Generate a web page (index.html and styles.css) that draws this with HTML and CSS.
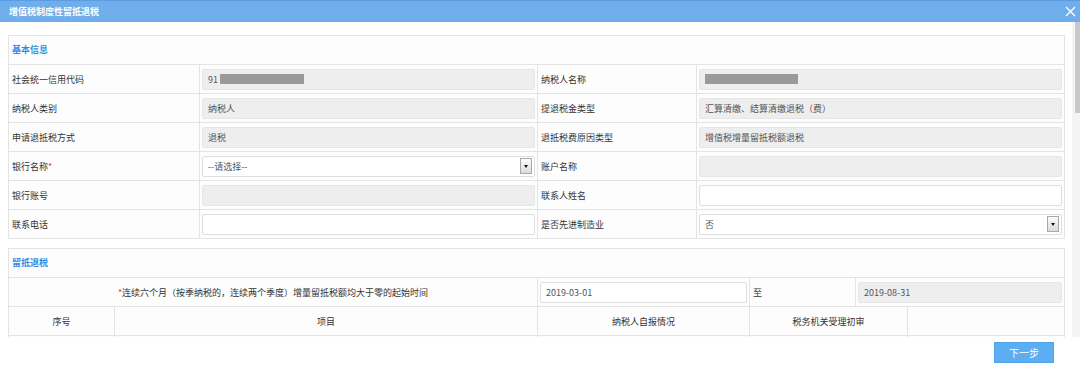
FILE: index.html
```html
<!DOCTYPE html>
<html lang="zh-CN">
<head>
  <meta charset="UTF-8">
  <meta name="viewport" content="width=device-width, initial-scale=1.0">
  <title>增值税制度性留抵退税</title>
  <link rel="stylesheet" href="styles.css">
</head>
<body>

  <div class="dialog">
    <div class="dialog__title">
      <span>增值税制度性留抵退税</span>
      <svg class="dialog__close" width="11" height="11" viewBox="0 0 11 11">
        <path d="M1 1 L10 10 M10 1 L1 10" stroke="#fff" stroke-width="1.4" fill="none"/>
      </svg>
    </div>

    <div class="dialog__body">
      <div class="dialog__content">

        <div class="panel">
          <div class="panel__header">基本信息</div>

          <div class="formRow">
            <span class="formRow__label">社会统一信用代码</span>
            <span class="formRow__field"><span class="input input--readonly">91<i class="mask mask--short"></i></span></span>
            <span class="formRow__label">纳税人名称</span>
            <span class="formRow__field"><span class="input input--readonly"><i class="mask mask--long"></i></span></span>
          </div>

          <div class="formRow">
            <span class="formRow__label">纳税人类别</span>
            <span class="formRow__field"><span class="input input--readonly">纳税人</span></span>
            <span class="formRow__label">提退税金类型</span>
            <span class="formRow__field"><span class="input input--readonly">汇算清缴、结算清缴退税（费）</span></span>
          </div>

          <div class="formRow">
            <span class="formRow__label">申请退抵税方式</span>
            <span class="formRow__field"><span class="input input--readonly">退税</span></span>
            <span class="formRow__label">退抵税费原因类型</span>
            <span class="formRow__field"><span class="input input--readonly">增值税增量留抵税额退税</span></span>
          </div>

          <div class="formRow">
            <span class="formRow__label">银行名称<em class="required">*</em></span>
            <span class="formRow__field"><span class="input select">--请选择--<b class="select__btn"></b></span></span>
            <span class="formRow__label">账户名称</span>
            <span class="formRow__field"><span class="input input--readonly"></span></span>
          </div>

          <div class="formRow">
            <span class="formRow__label">银行账号</span>
            <span class="formRow__field"><span class="input input--readonly"></span></span>
            <span class="formRow__label">联系人姓名</span>
            <span class="formRow__field"><span class="input"></span></span>
          </div>

          <div class="formRow">
            <span class="formRow__label">联系电话</span>
            <span class="formRow__field"><span class="input"></span></span>
            <span class="formRow__label">是否先进制造业</span>
            <span class="formRow__field"><span class="input select">否<b class="select__btn"></b></span></span>
          </div>
        </div>

        <div class="panel">
          <div class="panel__header">留抵退税</div>

          <div class="periodRow">
            <span class="periodRow__label"><em class="required">*</em>连续六个月（按季纳税的，连续两个季度）增量留抵税额均大于零的起始时间</span>
            <span class="formRow__field"><span class="input">2019-03-01</span></span>
            <span class="formRow__label">至</span>
            <span class="formRow__field"><span class="input input--readonly">2019-08-31</span></span>
          </div>

          <div class="tableHead">
            <span>序号</span>
            <span>项目</span>
            <span>纳税人自报情况</span>
            <span>税务机关受理初审</span>
            <span></span>
          </div>

          <div class="tableHead">
            <span></span>
            <span></span>
            <span></span>
            <span></span>
            <span></span>
          </div>
        </div>

      </div>
      <div class="scrollbar"><div class="scrollbar__thumb"></div></div>
    </div>

    <div class="dialog__footer">
      <button type="button" class="nextBtn">下一步</button>
    </div>
  </div>

</body>
</html>
```

FILE: styles.css
```css
* {
  box-sizing: border-box;
  padding: 0;
  margin: 0;
}
body {
  width: 1080px;
  height: 371px;
  overflow: hidden;
  background-color: #fff;
  font-family: "Noto Sans CJK SC", "Noto Sans", sans-serif;
  font-size: 9px;
  color: #333;
}
.dialog {
  display: flex;
  flex-direction: column;
  height: 371px;
}
.dialog__title {
  display: flex;
  justify-content: space-between;
  align-items: center;
  height: 22px;
  padding: 0 4px 0 9px;
  background-color: #6fadeb;
  border-top: 1px solid #5b9de0;
  color: #fff;
  font-weight: 700;
  font-size: 9px;
}
.dialog__close {
  margin-top: -1px;
}
.dialog__body {
  display: flex;
  height: 315px;
  overflow: hidden;
}
.dialog__content {
  flex-grow: 2;
  padding: 13px 7px 0 8px;
}
.scrollbar {
  width: 8px;
  background-color: #f4f4f4;
  padding-left: 3px;
}
.scrollbar__thumb {
  height: 91px;
  background-color: #c9c9c9;
}
.panel {
  border: 1px solid #e4e4e4;
  background-color: #fdfdfd;
  margin-bottom: 9px;
}
.panel__header {
  height: 28px;
  line-height: 28px;
  padding-left: 3px;
  color: #2f8ce6;
  font-weight: 700;
}
.formRow, .periodRow, .tableHead {
  display: grid;
  height: 29px;
  border-top: 1px solid #e4e4e4;
}
.formRow {
  grid-template-columns: 191px 338px 159px 1fr;
}
.periodRow {
  grid-template-columns: 529px 212px 106px 1fr;
}
.tableHead {
  grid-template-columns: 106px 423px 212px 158px 1fr;
}
.formRow__label {
  display: flex;
  align-items: center;
  padding-left: 3px;
  border-right: 1px solid #e4e4e4;
}
.formRow__field {
  display: flex;
  align-items: center;
  padding: 0 2px 0 2px;
  border-right: 1px solid #e4e4e4;
}
.formRow > span:last-child, .periodRow > span:last-child, .tableHead > span:last-child {
  border-right: none;
}
.periodRow__label {
  display: flex;
  align-items: center;
  justify-content: center;
  border-right: 1px solid #e4e4e4;
}
.tableHead span {
  display: flex;
  align-items: center;
  justify-content: center;
  border-right: 1px solid #e4e4e4;
}
.required {
  font-style: normal;
  color: #e8383d;
}
.input {
  position: relative;
  display: flex;
  align-items: center;
  width: 100%;
  height: 21px;
  padding-left: 5px;
  background-color: #fff;
  border: 1px solid #dedede;
  border-radius: 2px;
  color: #555;
}
.input--readonly {
  background-color: #eeeeee;
  border-color: #e6e6e6;
}
.mask {
  display: inline-block;
  height: 10px;
  background-color: #9a9a9a;
}
.mask--short {
  width: 84px;
  margin-left: 2px;
}
.mask--long {
  width: 93px;
}
.select__btn {
  position: absolute;
  right: 2px;
  top: 1px;
  width: 12px;
  height: 16px;
  border: 1px solid #a8a8a8;
  background: linear-gradient(#fafafa, #dcdcdc);
}
.select__btn::after {
  content: "";
  position: absolute;
  left: 3px;
  top: 6px;
  border-left: 2.5px solid transparent;
  border-right: 2.5px solid transparent;
  border-top: 3px solid #111;
}
.dialog__footer {
  display: flex;
  justify-content: flex-end;
  align-items: flex-start;
  height: 34px;
  padding: 5px 26px 0 0;
  background-color: #fff;
}
.nextBtn {
  width: 60px;
  height: 21px;
  border: 1px solid #4fa3ea;
  background-color: #5cadf1;
  color: #fff;
  font-family: "Noto Sans CJK SC", sans-serif;
  font-size: 10px;
  outline: none;
}
```
